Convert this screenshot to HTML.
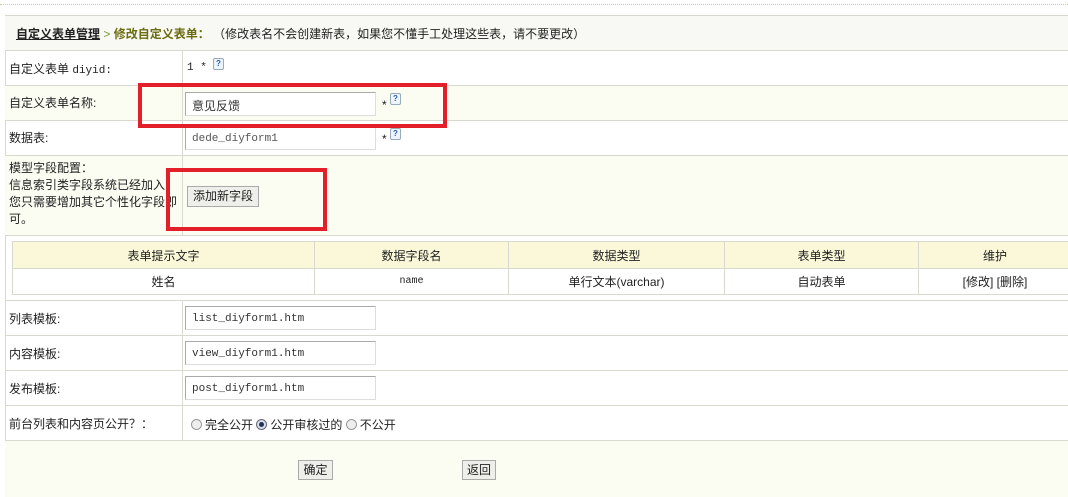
<!DOCTYPE html>
<html><head><meta charset="utf-8"><style>
*{margin:0;padding:0;box-sizing:border-box}
body{width:1068px;height:497px;background:#fff;font-family:"Liberation Sans","Noto Sans CJK SC","WenQuanYi Zen Hei",sans-serif;font-size:12px;color:#222;position:relative;overflow:hidden}
.a{position:absolute}
.row{position:absolute;left:5px;width:1063px;border-top:1px solid #d9d9cf}
.cr{background:#fbfcf2}
.lab{position:absolute;left:4px}
.vd{position:absolute;left:182px;width:1px;background:#d9d9cf}
.inp{position:absolute;left:185px;width:191px;height:24px;border:1px solid #aaa;border-right-color:#ddd;border-bottom-color:#ddd;background:#fff;font-family:"Liberation Mono",monospace;font-size:11px;padding:6px 0 0 6px;color:#333}
.q{position:absolute;width:11px;height:12px;border:1px solid #9ab;background:#eef4fb;border-radius:2px;font-size:8px;line-height:10px;text-align:center;color:#2a5db0;font-weight:bold}
.btn{position:absolute;border:1px solid #aaa;background:#eeeeea;font-size:12px;text-align:center;line-height:19px}
.red{position:absolute;border:4px solid #e3202a}
td{border:1px solid #d9d9cf;text-align:center;font-size:12px}
.rad{display:inline-block;width:11px;height:11px;border-radius:50%;border:1px solid #999;background:#eee;vertical-align:-1px;margin-right:3px;position:relative}
</style></head><body>
<div class="a" style="left:0;top:4px;width:1068px;border-top:1px dotted #cccc99"></div>
<div class="a" style="left:5px;top:15px;width:1063px;height:482px;border-left:1px solid #d9d9cf;border-top:1px solid #d9d9cf"></div>
<div class="row" style="top:15px;height:35px;background:#f8f8f4"></div>
<div class="a" style="left:16px;top:25px;font-size:12px"><b style="text-decoration:underline">自定义表单管理</b> <span style="color:#7a9a3a">&gt;</span> <b style="color:#6b6b10">修改自定义表单：</b> （修改表名不会创建新表，如果您不懂手工处理这些表，请不要更改）</div>
<div class="row" style="top:50px;height:35px"></div>
<div class="row cr" style="top:85px;height:35px"></div>
<div class="row" style="top:120px;height:35px"></div>
<div class="row cr" style="top:155px;height:80px"></div>
<div class="row" style="top:235px;height:65px"></div>
<div class="row" style="top:300px;height:35px"></div>
<div class="row" style="top:335px;height:35px"></div>
<div class="row" style="top:370px;height:35px"></div>
<div class="row" style="top:405px;height:35px"></div>
<div class="row cr" style="top:440px;height:57px"></div>
<div class="vd" style="top:50px;height:185px"></div>
<div class="vd" style="top:300px;height:140px"></div>
<div class="lab" style="left:9px;top:60px">自定义表单 <span style="font-family:'Liberation Mono',monospace;font-size:11px">diyid:</span></div>
<div class="a" style="left:187px;top:62px;font-family:'Liberation Mono',monospace;font-size:11px">1 *</div>
<div class="q" style="left:213px;top:58px">?</div>
<div class="lab" style="left:9px;top:94px">自定义表单名称:</div>
<div class="inp" style="top:92px;font-family:'Liberation Sans','Noto Sans CJK SC',sans-serif;font-size:12px;padding-top:4px">意见反馈</div>
<div class="a" style="left:382px;top:98px">*</div><div class="q" style="left:390px;top:93px">?</div>
<div class="lab" style="left:9px;top:129px">数据表:</div>
<div class="inp" style="top:126px;color:#555">dede_diyform1</div>
<div class="a" style="left:382px;top:132px">*</div><div class="q" style="left:390px;top:128px">?</div>
<div class="lab" style="left:9px;top:160px;line-height:17px;width:170px">模型字段配置：<br>信息索引类字段系统已经加入<br>您只需要增加其它个性化字段即<br>可。</div>
<div class="btn" style="left:187px;top:186px;width:72px;height:21px">添加新字段</div>
<table class="a" style="left:12px;top:241px;width:1060px;border-collapse:collapse">
<tr style="background:#fbf8d9;height:27px"><td style="width:302px">表单提示文字</td><td style="width:194px">数据字段名</td><td style="width:216px">数据类型</td><td style="width:194px">表单类型</td><td>维护</td></tr>
<tr style="height:26px"><td>姓名</td><td style="font-family:'Liberation Mono',monospace;font-size:10px">name</td><td>单行文本(varchar)</td><td>自动表单</td><td>[修改] [删除]</td></tr>
</table>
<div class="lab" style="left:9px;top:310px">列表模板:</div>
<div class="inp" style="top:306px">list_diyform1.htm</div>
<div class="lab" style="left:9px;top:345px">内容模板:</div>
<div class="inp" style="top:341px">view_diyform1.htm</div>
<div class="lab" style="left:9px;top:380px">发布模板:</div>
<div class="inp" style="top:376px">post_diyform1.htm</div>
<div class="lab" style="left:9px;top:415px">前台列表和内容页公开？：</div>
<div class="a" style="left:191px;top:416px"><span class="rad"></span>完全公开 <span class="rad" style="background:#dde;border-color:#667"><span style="position:absolute;left:2px;top:2px;width:5px;height:5px;border-radius:50%;background:#235"></span></span>公开审核过的 <span class="rad"></span>不公开</div>
<div class="btn" style="left:298px;top:460px;width:35px;height:20px">确定</div>
<div class="btn" style="left:462px;top:460px;width:34px;height:20px">返回</div>
<div class="red" style="left:138px;top:83px;width:309px;height:45px"></div>
<div class="red" style="left:166px;top:168px;width:161px;height:63px"></div>
</body></html>
